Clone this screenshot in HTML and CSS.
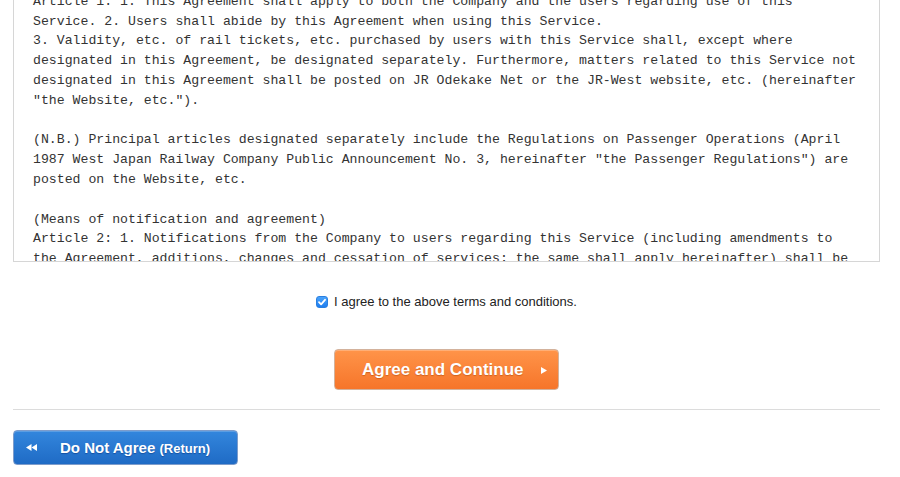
FILE: index.html
```html
<!DOCTYPE html>
<html lang="en">
<head>
<meta charset="utf-8">
<title>Terms of Use</title>
<link rel="stylesheet" href="styles.css">
</head>
<body>
<div class="page">
  <div class="terms">
<pre class="terms-text">Article 1: 1. This Agreement shall apply to both the Company and the users regarding use of this
Service. 2. Users shall abide by this Agreement when using this Service.
3. Validity, etc. of rail tickets, etc. purchased by users with this Service shall, except where
designated in this Agreement, be designated separately. Furthermore, matters related to this Service not
designated in this Agreement shall be posted on JR Odekake Net or the JR-West website, etc. (hereinafter
"the Website, etc.").

(N.B.) Principal articles designated separately include the Regulations on Passenger Operations (April
1987 West Japan Railway Company Public Announcement No. 3, hereinafter "the Passenger Regulations") are
posted on the Website, etc.

(Means of notification and agreement)
Article 2: 1. Notifications from the Company to users regarding this Service (including amendments to
the Agreement, additions, changes and cessation of services; the same shall apply hereinafter) shall be
posted on the Website, etc.</pre>
  </div>

  <label class="agree-row">
    <span class="checkbox">
      <svg viewBox="0 0 12 12" width="12" height="12" aria-hidden="true"><path d="M3 6.2 L5.1 8.3 L9 3.8" fill="none" stroke="#fff" stroke-width="1.8" stroke-linecap="round" stroke-linejoin="round"/></svg>
    </span>
    <span class="agree-label">I agree to the above terms and conditions.</span>
  </label>

  <div class="primary-row">
    <button class="btn-agree" type="button">
      <span class="btn-agree-text">Agree and Continue</span>
      <svg class="arrow-right" viewBox="0 0 6 7" width="6" height="7" aria-hidden="true"><polygon points="0,0 6,3.5 0,7" fill="#fff"/></svg>
    </button>
  </div>

  <hr class="divider">

  <button class="btn-back" type="button">
    <svg class="arrow-back" viewBox="0 0 11 7" width="11" height="7" aria-hidden="true"><polygon points="5.5,0 0,3.5 5.5,7" fill="#fff"/><polygon points="11,0 5.5,3.5 11,7" fill="#fff"/></svg>
    <span class="btn-back-text">Do Not Agree <small>(Return)</small></span>
  </button>
</div>
</body>
</html>
```

FILE: styles.css
```css
html, body {
  margin: 0;
  padding: 0;
  background: #fff;
}

body {
  font-family: "Liberation Sans", Arial, Helvetica, sans-serif;
  color: #222;
  overflow: hidden;
}

.page {
  padding: 0 20px 0 13px;
}

.terms {
  box-sizing: border-box;
  margin-top: -40px;
  height: 302px;
  border: 1px solid #d6d6d6;
  padding: 0 18px 0 19px;
  overflow: hidden;
  background: #fff;
}

.terms-text {
  margin: 0;
  padding-top: 30.8px;
  font-family: "Liberation Mono", "Courier New", monospace;
  font-size: 13.2px;
  line-height: 19.8px;
  color: #333;
  white-space: pre-wrap;
}

.agree-row {
  display: flex;
  justify-content: center;
  align-items: center;
  gap: 6px;
  height: 20px;
  margin-top: 29px;
  cursor: pointer;
}

.checkbox {
  box-sizing: border-box;
  width: 12px;
  height: 12px;
  border-radius: 3px;
  background: linear-gradient(#4aa3fb, #1e7ef0);
  border: 1px solid #2a7fe0;
  display: flex;
  align-items: center;
  justify-content: center;
  margin-top: 1px;
}

.checkbox svg {
  display: block;
  flex: none;
}

.agree-label {
  font-size: 13px;
  color: #222;
}

.primary-row {
  display: flex;
  justify-content: center;
  margin-top: 38px;
}

.btn-agree {
  box-sizing: border-box;
  width: 225px;
  height: 41px;
  display: flex;
  align-items: center;
  justify-content: space-between;
  padding: 0 11px 0 27px;
  border: 1px solid #d3b29c;
  border-radius: 4px;
  background: linear-gradient(#ff9449, #f6752a);
  box-shadow: inset 0 1px 0 rgba(255, 255, 255, 0.25);
  font-family: "Liberation Sans", Arial, Helvetica, sans-serif;
  font-weight: bold;
  font-size: 17px;
  color: #fff;
  text-shadow: 0 1px 1px rgba(160, 60, 0, 0.45);
  cursor: pointer;
}

.btn-agree-text {
  line-height: 20px;
}

.arrow-right {
  display: block;
  margin-top: 2px;
}

.divider {
  border: 0;
  border-top: 1px solid #dcdcdc;
  margin: 19px 0 0;
  height: 0;
}

.btn-back {
  box-sizing: border-box;
  width: 225px;
  height: 35px;
  margin-top: 20px;
  display: flex;
  align-items: center;
  padding: 0 0 0 12px;
  gap: 23px;
  border: 1px solid #7d9ccb;
  border-radius: 4px;
  background: linear-gradient(#3386dd, #1f6bc5);
  box-shadow: inset 0 1px 0 rgba(255, 255, 255, 0.2);
  font-family: "Liberation Sans", Arial, Helvetica, sans-serif;
  font-weight: bold;
  font-size: 15px;
  color: #fff;
  text-shadow: 0 1px 1px rgba(0, 40, 110, 0.45);
  cursor: pointer;
}

.arrow-back {
  display: block;
  flex: none;
}

.btn-back-text small {
  font-size: 13px;
}
```
